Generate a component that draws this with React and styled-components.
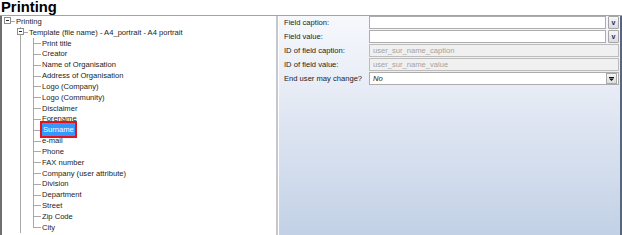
import React from "react";
import styled, { createGlobalStyle } from "styled-components";

const Global = createGlobalStyle`
  html, body { margin: 0; padding: 0; background: #fff; }
  body { font-family: "Liberation Sans", Arial, sans-serif; }
`;

const Root = styled.div`
  width: 622px;
  height: 235px;
  overflow: hidden;
  background: #fff;
  display: flex;
  flex-direction: column;
`;

const TitleBar = styled.div`
  height: 15px;
  flex-shrink: 0;
  border-bottom: 1px solid #a3a3a3;
  font: bold 14.8px/15px "Liberation Sans", Arial, sans-serif;
  color: #000;
  padding-left: 1px;
  box-sizing: content-box;
`;

const Body = styled.div`
  flex: 1;
  display: flex;
  min-height: 0;
  border-left: 2px solid #6f6f6f;
`;

const TreePane = styled.div`
  width: 274px;
  flex-shrink: 0;
  background: #fff;
  overflow: hidden;
  font-size: 7.6px;
  color: #1c1c1c;
`;

const Splitter = styled.div`
  width: 2px;
  flex-shrink: 0;
  background: #c6c6ce;
`;

const Row = styled.div`
  height: 10.84px;
  display: flex;
  align-items: stretch;
  white-space: nowrap;
`;

const Guide = styled.span`
  width: 13px;
  flex-shrink: 0;
  position: relative;
  &::before {
    content: "";
    display: ${(p) => (p.$v === "none" ? "none" : "block")};
    position: absolute;
    left: 5px;
    width: 1px;
    background: #a9a9a9;
    top: ${(p) => (p.$v === "bottom" ? "50%" : "0")};
    bottom: ${(p) => (p.$v === "top" ? "50%" : "0")};
  }
  &::after {
    content: "";
    display: ${(p) => (p.$h ? "block" : "none")};
    position: absolute;
    left: 5px;
    right: 0;
    top: 50%;
    height: 1px;
    background: #a9a9a9;
  }
`;

const Expander = styled.span`
  position: absolute;
  left: 2px;
  top: 50%;
  margin-top: -4px;
  width: 7px;
  height: 7px;
  box-sizing: border-box;
  border: 1px solid #8e8e8e;
  background: #fff;
  z-index: 1;
  &::after {
    content: "";
    position: absolute;
    left: 1px;
    top: 2px;
    width: 3px;
    height: 1px;
    background: #2a2a2a;
  }
`;

const Label = styled.span`
  display: flex;
  align-items: center;
  padding: 0 1px;
  position: relative;
  z-index: 2;
  ${(p) =>
    p.$selected &&
    `
    background: #3399ff;
    color: #fff;
    margin: -1px 0 -1px 1px;
    padding: 0 1px;
    box-shadow: 0 0 0 2px #e3121c;
  `}
`;

const Panel = styled.div`
  flex: 1;
  min-width: 0;
  border-left: 1px solid #fff;
  border-right: 2px solid #56677d;
  background: linear-gradient(#f6f8fc 0%, #e6ebf5 35%, #c2d1e6 100%);
`;

const Form = styled.div`
  display: grid;
  grid-template-columns: 90px 1fr;
  grid-auto-rows: 14px;
  padding-right: 1px;
  font-size: 7.6px;
  color: #1c1c1c;
`;

const FieldLabel = styled.div`
  padding-left: 5px;
  display: flex;
  align-items: center;
  height: 13px;
`;

const FieldCell = styled.div`
  display: flex;
  gap: 2px;
  height: 13px;
`;

const Input = styled.div`
  flex: 1;
  box-sizing: border-box;
  height: 13px;
  border: 1px solid ${(p) => (p.$disabled ? "#bcbcbc" : "#acacac")};
  background: ${(p) => (p.$disabled ? "#f0f0f0" : "#fff")};
  color: ${(p) => (p.$disabled ? "#a3a3a3" : "#1c1c1c")};
  font-style: ${(p) => (p.$italic ? "italic" : "normal")};
  display: flex;
  align-items: center;
  padding: 0 3px;
  position: relative;
`;

const DropButton = styled.div`
  width: 11px;
  height: 13px;
  box-sizing: border-box;
  border: 1px solid #a5a5a5;
  border-radius: 1px;
  background: linear-gradient(#f7f7f7, #dcdcdc);
  display: flex;
  align-items: center;
  justify-content: center;
  font: bold 7px/1 "Liberation Sans", Arial, sans-serif;
  color: #1d2c6e;
`;

const ComboButton = styled.div`
  position: absolute;
  right: 1px;
  top: 0px;
  width: 11px;
  height: 11px;
  box-sizing: border-box;
  border: 1px solid #a9a9a9;
  background: linear-gradient(#f4f4f4, #dedede);
  display: flex;
  align-items: center;
  justify-content: center;
`;

const children = [
  "Print title",
  "Creator",
  "Name of Organisation",
  "Address of Organisation",
  "Logo (Company)",
  "Logo (Community)",
  "Disclaimer",
  "Forename",
  "Surname",
  "e-mail",
  "Phone",
  "FAX number",
  "Company (user attribute)",
  "Division",
  "Department",
  "Street",
  "Zip Code",
  "City",
];

export default function App() {
  return (
    <>
      <Global />
      <Root>
        <TitleBar>Printing</TitleBar>
        <Body>
          <TreePane>
            <Row>
              <Guide $v="none" $h>
                <Expander />
              </Guide>
              <Label>Printing</Label>
            </Row>
            <Row>
              <Guide $v="none" />
              <Guide $v="full" $h>
                <Expander />
              </Guide>
              <Label>Template (file name) - A4_portrait - A4 portrait</Label>
            </Row>
            {children.map((c, i) => (
              <Row key={c}>
                <Guide $v="none" />
                <Guide $v="full" />
                <Guide $v={i === children.length - 1 ? "top" : "full"} $h />
                <Label $selected={c === "Surname"}>{c}</Label>
              </Row>
            ))}
          </TreePane>
          <Splitter />
          <Panel>
            <Form>
              <FieldLabel>Field caption:</FieldLabel>
              <FieldCell>
                <Input />
                <DropButton>v</DropButton>
              </FieldCell>
              <FieldLabel>Field value:</FieldLabel>
              <FieldCell>
                <Input />
                <DropButton>v</DropButton>
              </FieldCell>
              <FieldLabel>ID of field caption:</FieldLabel>
              <FieldCell>
                <Input $disabled>user_sur_name_caption</Input>
              </FieldCell>
              <FieldLabel>ID of field value:</FieldLabel>
              <FieldCell>
                <Input $disabled>user_sur_name_value</Input>
              </FieldCell>
              <FieldLabel>End user may change?</FieldLabel>
              <FieldCell>
                <Input $italic>
                  No
                  <ComboButton>
                    <svg width="5" height="4" viewBox="0 0 5 4">
                      <rect x="0" y="0" width="5" height="1" fill="#111" />
                      <path d="M0 1.5 H5 L2.5 4 Z" fill="#111" />
                    </svg>
                  </ComboButton>
                </Input>
              </FieldCell>
            </Form>
          </Panel>
        </Body>
      </Root>
    </>
  );
}
